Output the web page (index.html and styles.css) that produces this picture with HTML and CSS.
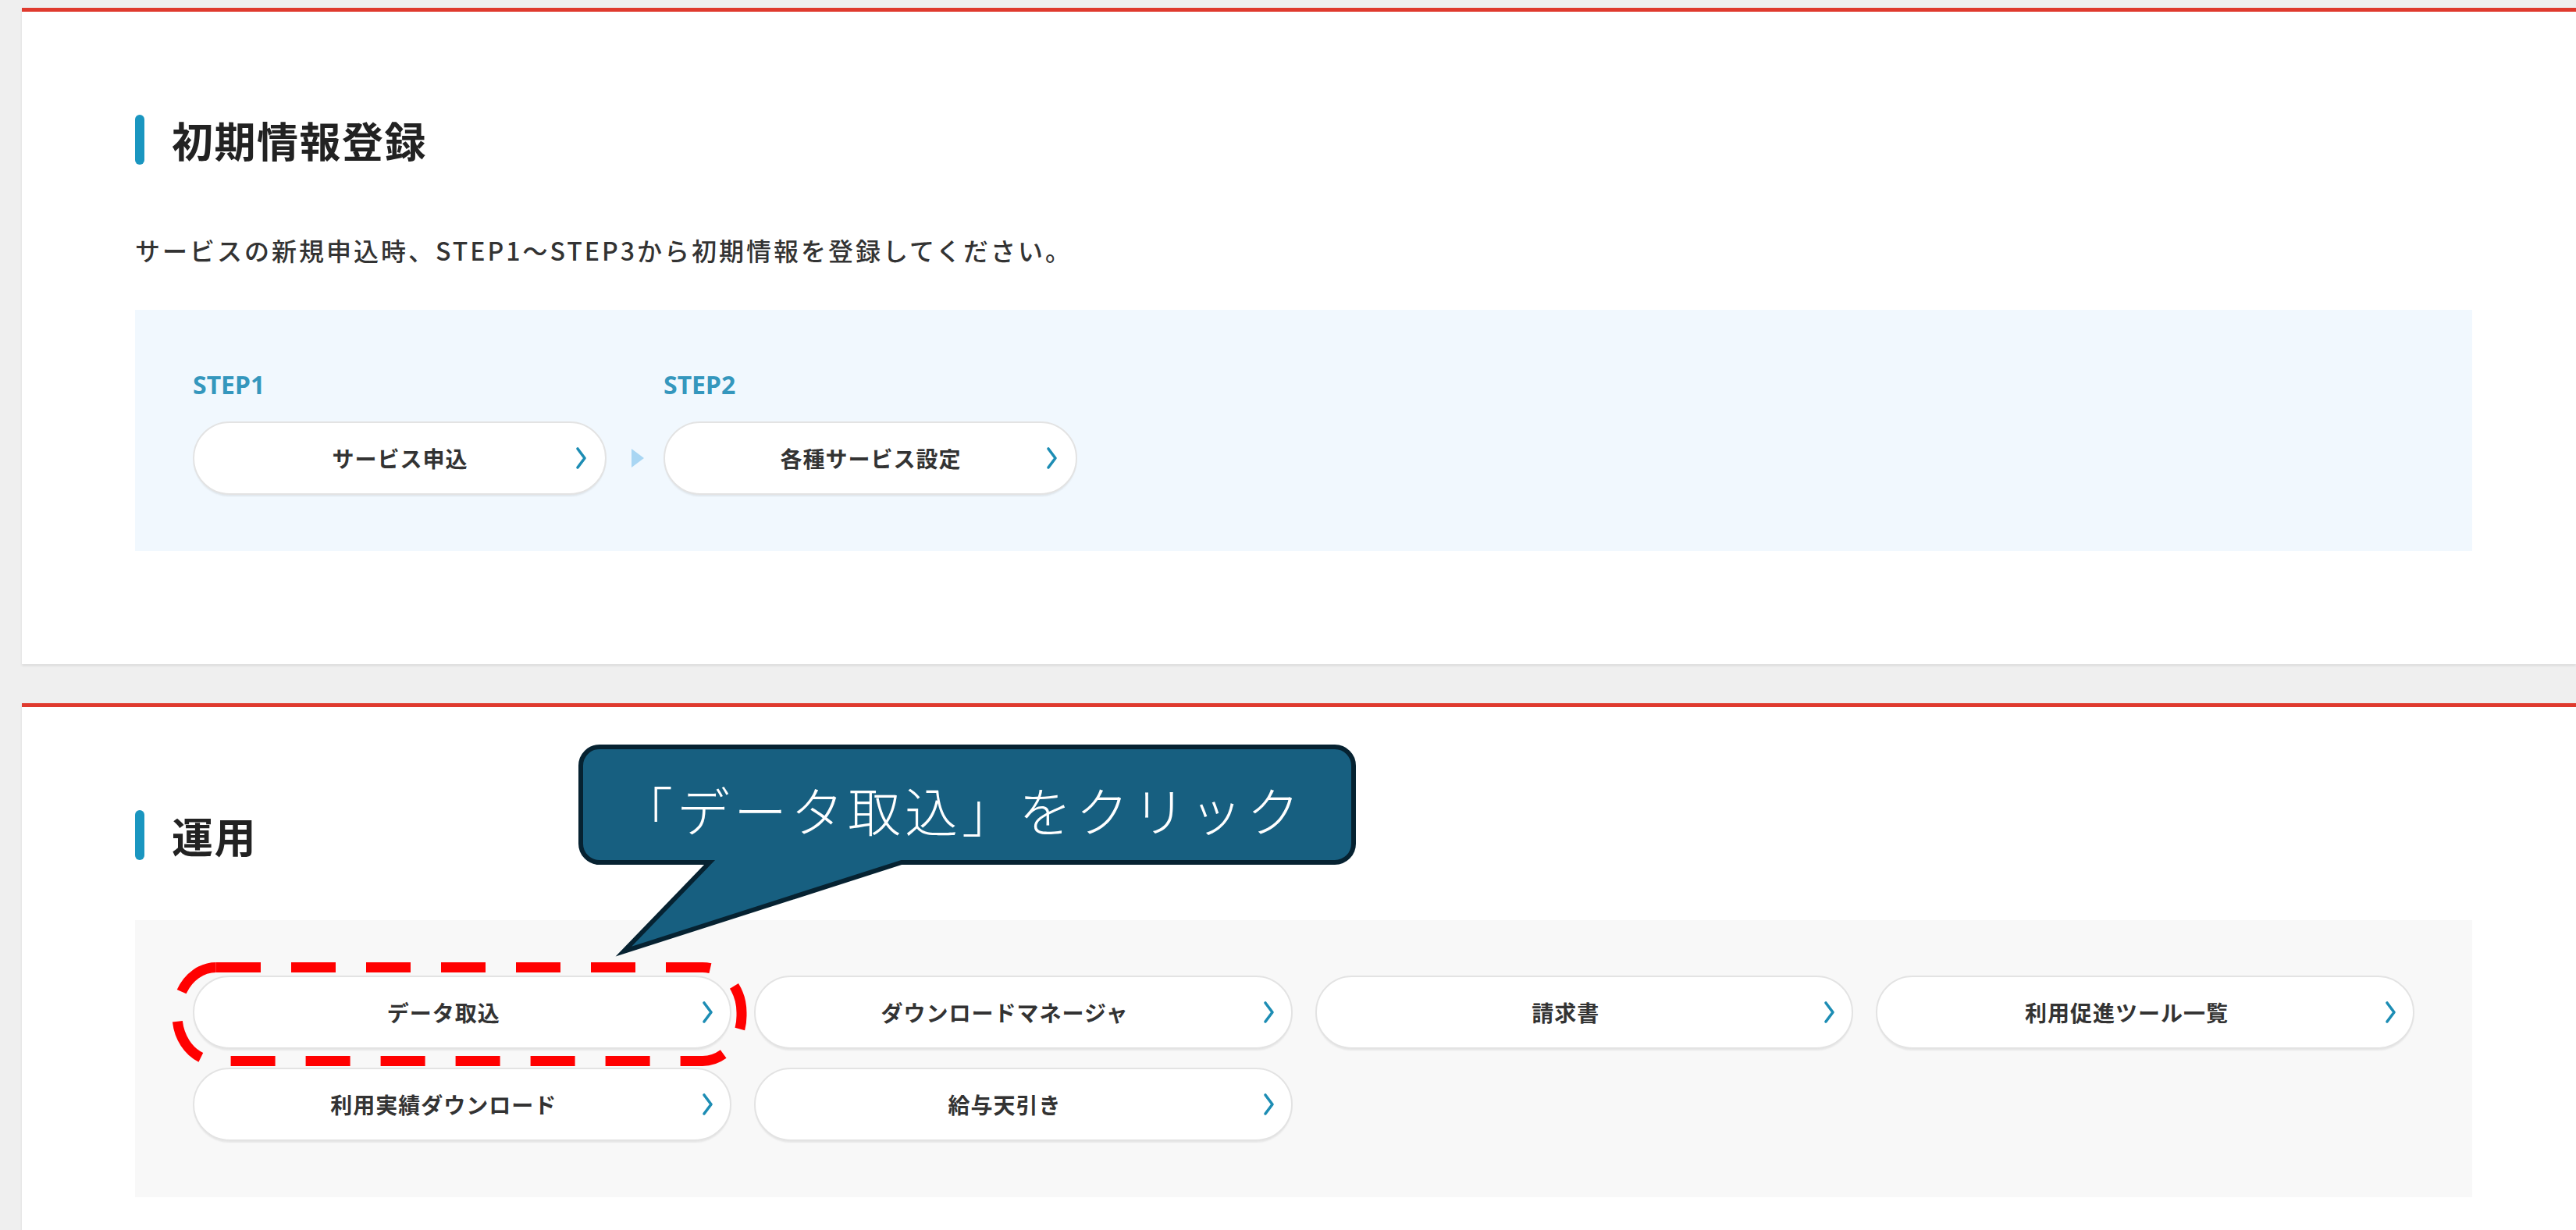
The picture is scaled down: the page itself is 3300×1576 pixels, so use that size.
FILE: index.html
```html
<!DOCTYPE html>
<html lang="ja">
<head>
<meta charset="utf-8">
<title>初期情報登録</title>
<link rel="stylesheet" href="styles.css">
</head>
<body>
<div class="page">
  <section class="card card-init">
    <h2 class="heading"><span class="heading-bar"></span><span class="heading-text">初期情報登録</span></h2>
    <p class="lead">サービスの新規申込時、STEP1〜STEP3から初期情報を登録してください。</p>
    <div class="step-panel">
      <div class="step">
        <div class="step-label">STEP1</div>
        <a class="pill pill-step"><span class="pill-text">サービス申込</span><svg class="chev" viewBox="0 0 17 30"><polyline points="4,3 13,15 4,27"/></svg></a>
      </div>
      <div class="step-arrow"><span class="tri"></span></div>
      <div class="step">
        <div class="step-label">STEP2</div>
        <a class="pill pill-step"><span class="pill-text">各種サービス設定</span><svg class="chev" viewBox="0 0 17 30"><polyline points="4,3 13,15 4,27"/></svg></a>
      </div>
    </div>
  </section>

  <section class="card card-ops">
    <h2 class="heading"><span class="heading-bar"></span><span class="heading-text">運用</span></h2>
    <div class="ops-panel">
      <a class="pill pill-ops pill-highlight"><span class="pill-text">データ取込</span><svg class="chev" viewBox="0 0 17 30"><polyline points="4,3 13,15 4,27"/></svg>
        <svg class="dash-ring" viewBox="0 0 745 142"><rect x="9" y="9.5" width="723" height="120" rx="50" ry="58"/></svg>
      </a>
      <a class="pill pill-ops"><span class="pill-text">ダウンロードマネージャ</span><svg class="chev" viewBox="0 0 17 30"><polyline points="4,3 13,15 4,27"/></svg></a>
      <a class="pill pill-ops"><span class="pill-text">請求書</span><svg class="chev" viewBox="0 0 17 30"><polyline points="4,3 13,15 4,27"/></svg></a>
      <a class="pill pill-ops"><span class="pill-text">利用促進ツール一覧</span><svg class="chev" viewBox="0 0 17 30"><polyline points="4,3 13,15 4,27"/></svg></a>
      <a class="pill pill-ops"><span class="pill-text">利用実績ダウンロード</span><svg class="chev" viewBox="0 0 17 30"><polyline points="4,3 13,15 4,27"/></svg></a>
      <a class="pill pill-ops"><span class="pill-text">給与天引き</span><svg class="chev" viewBox="0 0 17 30"><polyline points="4,3 13,15 4,27"/></svg></a>
    </div>

    <div class="callout">
      <svg class="callout-shape" viewBox="0 0 1000 280"><path d="M27,3 H969 A24,24 0 0 1 993,27 V127 A24,24 0 0 1 969,151 H414 L58,265 L168,151 H27 A24,24 0 0 1 3,127 V27 A24,24 0 0 1 27,3 Z"/></svg>
      <div class="callout-text">「データ取込」をクリック</div>
    </div>
  </section>
</div>
</body>
</html>
```

FILE: styles.css
```css
* { box-sizing: border-box; }

html, body {
  margin: 0;
  padding: 0;
}

body {
  background: #efefef;
  font-family: "Noto Sans CJK JP", "Noto Sans", sans-serif;
  color: #333;
  overflow: hidden;
}

.page {
  padding: 10px 0 0 28px;
}

.card {
  position: relative;
  background: #fff;
  border-top: 5px solid #df3a2e;
  padding: 132px 133px 145px 145px;
  box-shadow: 0 2px 3px rgba(0, 0, 0, 0.09);
}

.card-ops {
  margin-top: 50px;
  padding-bottom: 42px;
}

.heading {
  display: flex;
  align-items: center;
  height: 64px;
  margin: 0;
}

.heading-bar {
  width: 12px;
  height: 64px;
  border-radius: 6px;
  background: #1a96c0;
}

.heading-text {
  margin-left: 35px;
  font-size: 53px;
  font-weight: 700;
  line-height: 64px;
  color: #222;
  letter-spacing: 1.5px;
}

.lead {
  margin: 86px 0 54px;
  font-size: 32px;
  line-height: 46px;
  letter-spacing: 3px;
  font-weight: 500;
  color: #333;
}

.step-panel {
  display: flex;
  align-items: flex-end;
  background: #f1f8fe;
  padding: 76px 74px 72px;
}

.step {
  display: flex;
  flex-direction: column;
  width: 530px;
}

.step-label {
  font-family: "Noto Sans", sans-serif;
  font-size: 32px;
  font-weight: 700;
  line-height: 40px;
  color: #3597bd;
  margin-bottom: 27px;
}

.step-arrow {
  width: 73px;
  height: 94px;
  display: flex;
  align-items: center;
  justify-content: center;
  padding-left: 6px;
}

.tri {
  width: 0;
  height: 0;
  border-left: 16px solid #a9d6f3;
  border-top: 12px solid transparent;
  border-bottom: 12px solid transparent;
}

.pill {
  display: grid;
  grid-template-columns: 1fr auto;
  align-items: center;
  height: 94px;
  background: #fff;
  border: 2px solid #e3e3e3;
  border-radius: 47px;
  box-shadow: 0 3px 2px -1px rgba(0, 0, 0, 0.07);
  color: #333;
  text-decoration: none;
}

.pill-step {
  padding: 0 22px 0 40px;
}

.pill-ops {
  padding: 0 20px 0 0;
}

.pill-text {
  text-align: center;
  font-size: 28px;
  font-weight: 700;
  letter-spacing: 1px;
  line-height: 40px;
  color: #333;
}

.pill-ops .pill-text {
  padding-right: 10px;
}

.chev {
  width: 17px;
  height: 32px;
  fill: none;
  stroke: #1d8db4;
  stroke-width: 3.6;
  stroke-linecap: round;
  stroke-linejoin: round;
}

.ops-panel {
  display: grid;
  grid-template-columns: repeat(4, 1fr);
  column-gap: 29px;
  row-gap: 24px;
  margin-top: 77px;
  background: #f8f8f8;
  padding: 71px 74px 72px 74px;
}

.pill-highlight {
  position: relative;
}

.dash-ring {
  position: absolute;
  left: -31px;
  top: -22px;
  width: 745px;
  height: 142px;
  overflow: visible;
  pointer-events: none;
}

.dash-ring rect {
  fill: none;
  stroke: #ff0000;
  stroke-width: 13;
  stroke-dasharray: 57 39;
}

.callout {
  position: absolute;
  left: 713px;
  top: 48px;
  width: 1000px;
  height: 280px;
  z-index: 5;
}

.callout-shape {
  position: absolute;
  left: 0;
  top: 0;
  width: 1000px;
  height: 280px;
  overflow: visible;
}

.callout-shape path {
  fill: #175f80;
  stroke: #062231;
  stroke-width: 6;
  stroke-linejoin: miter;
  stroke-miterlimit: 12;
}

.callout-text {
  position: relative;
  width: 996px;
  height: 154px;
  display: flex;
  align-items: center;
  justify-content: center;
  padding-top: 12px;
  padding-right: 14px;
  font-size: 68px;
  font-weight: 300;
  letter-spacing: 5px;
  color: #fff;
  line-height: 1;
}
```
